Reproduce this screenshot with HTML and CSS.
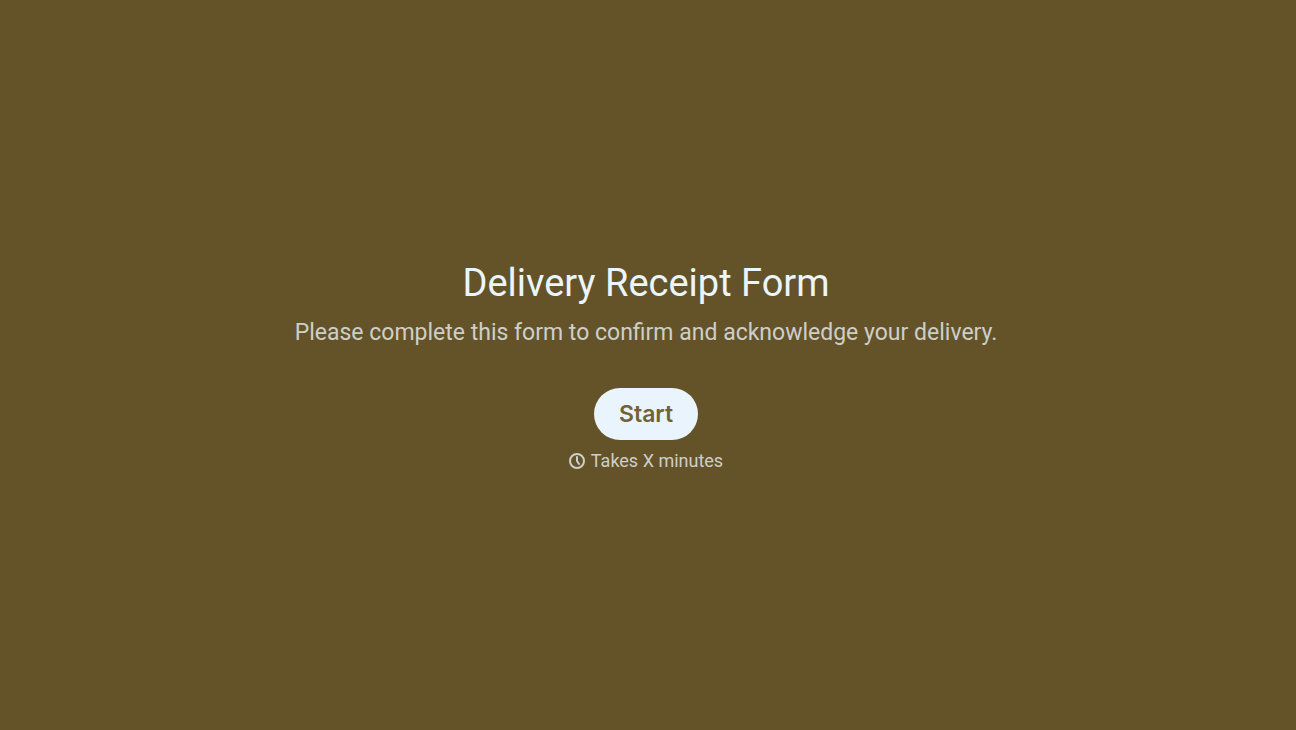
FILE: index.html
```
<!DOCTYPE html>
<html lang="en">
<head>
    <meta charset="UTF-8">
    <meta name="viewport" content="width=device-width, initial-scale=1.0">
    <title>Delivery Receipt Form</title>
    <link rel="stylesheet" href="styles.css">
</head>
<body>
    <main class="welcome">
        <h1>Delivery Receipt Form</h1>
        <p class="description">Please complete this form to confirm and acknowledge your delivery.</p>
        <button type="button" class="start-btn">Start</button>
        <p class="duration">
            <svg class="clock" viewBox="0 0 16 16" aria-hidden="true">
                <circle cx="8" cy="8" r="7"/>
                <path d="M8 4v4l2 3"/>
            </svg>
            Takes X minutes
        </p>
    </main>
</body>
</html>
```
FILE: styles.css
```
body {
    margin: 0;
    padding-right: 4px;
    min-height: 100vh;
    display: flex;
    justify-content: center;
    align-items: center;
    background-color: #645328;
    color: #ebf5ff;
    font-family: Roboto, "Liberation Sans", sans-serif;
}
.welcome {
    display: flex;
    flex-direction: column;
    align-items: center;
    padding: 2px 24px 0;
    text-align: center;
}
h1 {
    margin: 0;
    font-size: 38px;
    font-weight: 400;
    line-height: 48px;
}
.description {
    margin: 10px 0 39px;
    font-size: 23px;
    line-height: 32px;
    color: #cdcfc9;
}
.start-btn {
    height: 52px;
    padding: 0 25px;
    border: none;
    border-radius: 26px;
    background-color: #e9f4fd;
    color: #736237;
    font-family: Inter, "Liberation Sans", sans-serif;
    font-size: 23px;
    font-weight: 600;
    cursor: pointer;
}
.duration {
    display: flex;
    align-items: center;
    gap: 6px;
    margin: 9px 0 0;
    font-size: 18px;
    line-height: 24px;
    color: #cdcfc9;
}
.clock {
    width: 16px;
    height: 16px;
    fill: none;
    stroke: currentColor;
    stroke-width: 2;
    stroke-linecap: round;
    stroke-linejoin: round;
}
```
